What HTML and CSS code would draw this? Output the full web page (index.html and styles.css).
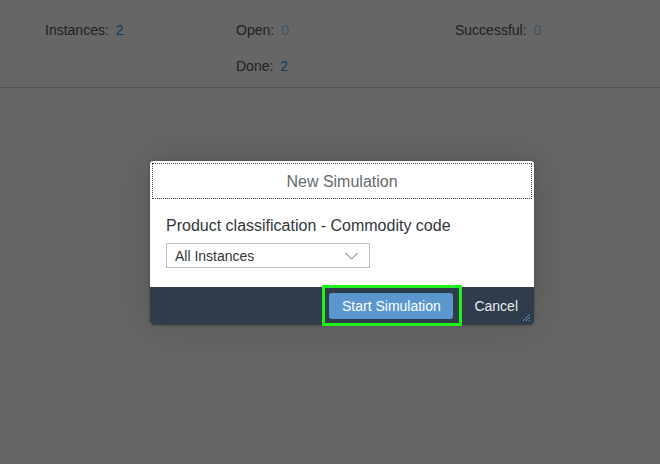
FILE: index.html
```html
<!DOCTYPE html>
<html>
<head>
<meta charset="utf-8">
<link rel="stylesheet" href="styles.css">
</head>
<body>
<div class="page">
  <div class="stats">
    <div class="stat"><span class="label">Instances:</span><span class="val dark">2</span></div>
    <div class="stat"><span class="label">Open:</span><span class="val light">0</span></div>
    <div class="stat"><span class="label">Successful:</span><span class="val light">0</span></div>
    <div class="stat"></div>
    <div class="stat"><span class="label">Done:</span><span class="val dark">2</span></div>
    <div class="stat"></div>
  </div>
</div>
<div class="dialog">
  <div class="header"><span class="title">New Simulation</span></div>
  <div class="content">
    <div class="field-label">Product classification - Commodity code</div>
    <div class="select">
      <span>All Instances</span>
      <svg class="chev" width="13" height="8" viewBox="0 0 13 8"><path d="M0.5 1 L6.5 7 L12.5 1" fill="none" stroke="#3f6d9c" stroke-width="1"/></svg>
    </div>
  </div>
  <div class="footer">
    <div class="focus"><button class="btn-primary">Start Simulation</button></div>
    <button class="btn-cancel">Cancel</button>
    <svg class="grip" width="9" height="9" viewBox="0 0 9 9"><path d="M8 1 L1 8 M8 4 L4 8 M8 7 L7 8" stroke="#5a8fc8" stroke-width="1"/></svg>
  </div>
</div>
</body>
</html>
```
FILE: styles.css
```css
* { box-sizing: border-box; }
html, body { margin: 0; padding: 0; }
body {
  width: 660px;
  height: 464px;
  background: #666666;
  font-family: "Liberation Sans", Arial, sans-serif;
  position: relative;
  overflow: hidden;
}
.page { height: 464px; }
.stats {
  display: grid;
  grid-template-columns: 191px 219px 205px;
  grid-auto-rows: 36px;
  padding: 12px 0 14px 45px;
  border-bottom: 1px solid #525252;
  height: 88px;
}
.stat { font-size: 14px; display: flex; align-items: center; }
.label { color: #1f1f1f; }
.val { margin-left: 7px; }
.val.dark { color: #0c3a5c; }
.val.light { color: #3d5566; }

.dialog {
  position: absolute;
  left: 150px;
  top: 161px;
  width: 384px;
  background: #fff;
  border-radius: 3px;
  box-shadow: 0 0 40px 6px rgba(0,0,0,0.12), 0 0 3px rgba(0,0,0,0.3);
}
.header {
  margin: 2px 2px 0 2px;
  height: 36px;
  outline: 1px dotted #444;
  outline-offset: -1px;
  display: flex;
  align-items: center;
  justify-content: center;
  border-bottom: 1px solid #e5e5e5;
}
.title { color: #666a6e; font-size: 16px; margin-top: 2px; }
.content { padding: 18px 16px 19px 16px; }
.field-label { color: #32363a; font-size: 16px; line-height: 18px; }
.select {
  margin-top: 8px;
  width: 204px;
  height: 25px;
  border: 1px solid #bfbfbf;
  display: flex;
  align-items: center;
  justify-content: space-between;
  padding: 0 11px 0 8px;
  font-size: 14px;
  color: #32363a;
}
.footer {
  height: 38px;
  background: #2f3c49;
  border-radius: 0 0 3px 3px;
  display: flex;
  align-items: center;
  justify-content: flex-end;
  padding-right: 16px;
  position: relative;
}
.focus {
  border: 3px solid #1ef21a;
  padding: 5px 6px 4px 4px;
  margin-right: 12px;
  margin-top: -1px;
  display: flex;
}
.btn-primary {
  font-family: inherit;
  font-size: 14px;
  color: #fff;
  background: #5a97cf;
  border: none;
  border-radius: 3px;
  height: 26px;
  width: 124px;
  padding: 0;
}
.btn-cancel {
  font-family: inherit;
  font-size: 14px;
  color: #e6ebf0;
  background: none;
  border: none;
  padding: 0;
}
.grip { position: absolute; right: 3px; bottom: 3px; }
```
